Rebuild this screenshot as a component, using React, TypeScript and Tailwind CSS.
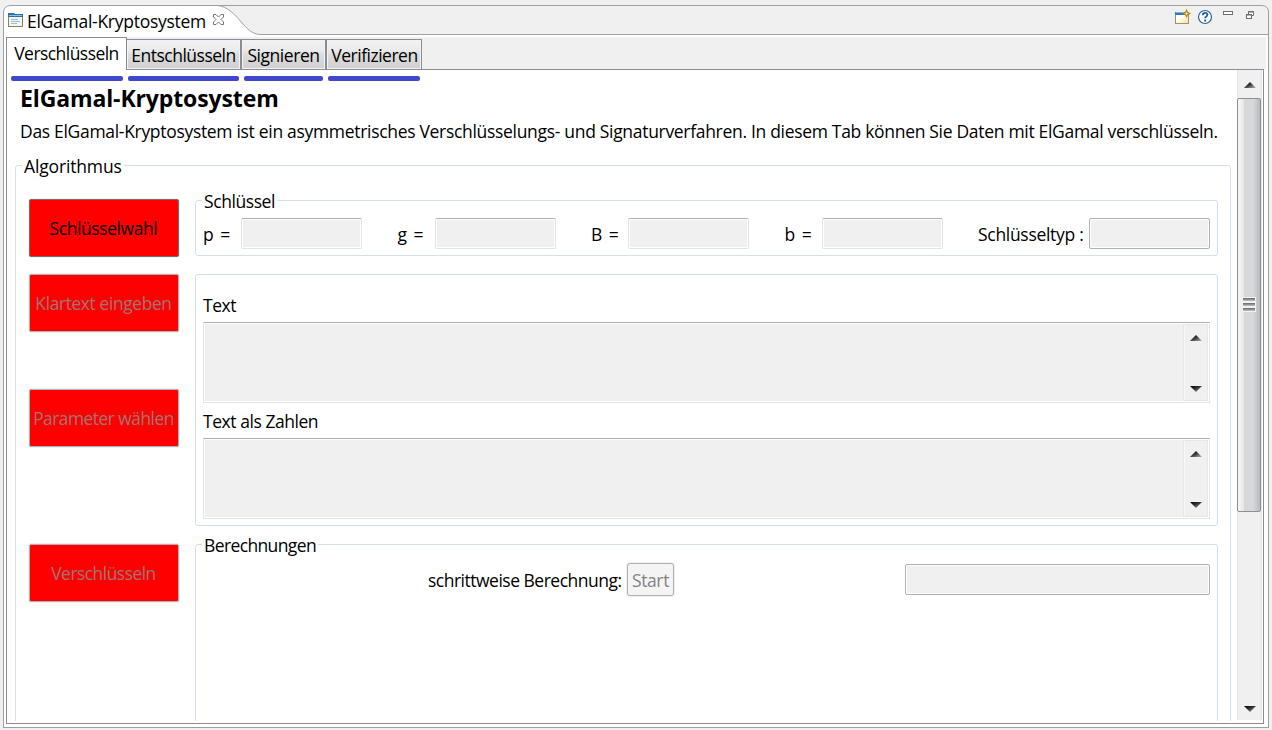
import type { ReactNode } from "react";

function Group({ label, labelClass = "", className, children }: { label?: string; labelClass?: string; className: string; children?: ReactNode }) {
  return (
    <section className={`relative rounded-[3px] border border-[#d5dfe9] ${className}`}>
      {label && (
        <h2 className={`absolute -top-[12px] left-[6px] bg-white px-[2px] leading-6 whitespace-nowrap ${labelClass}`}>{label}</h2>
      )}
      {children}
    </section>
  );
}

function Arrow({ down = false }: { down?: boolean }) {
  return (
    <svg width="12" height="6" viewBox="0 0 12 6" className="block shrink-0">
      <defs>
        <linearGradient id="arrowShade" x1="0" y1="0" x2="1" y2="1">
          <stop offset="0" stopColor="#000" />
          <stop offset="0.45" stopColor="#333" />
          <stop offset="1" stopColor="#b8b8b8" />
        </linearGradient>
      </defs>
      <path d={down ? "M0 0H12L6 6Z" : "M0 6H12L6 0Z"} fill="url(#arrowShade)" />
    </svg>
  );
}

function RedButton({ children, active = false, className = "" }: { children: ReactNode; active?: boolean; className?: string }) {
  return (
    <button
      className={`flex h-[58px] w-[150px] shrink-0 items-center justify-center rounded-[2px] border bg-[#ff0000] pr-px whitespace-nowrap ${
        active ? "border-[#707070] text-black" : "border-[#adb2b5] text-[#a07474]"
      } shadow-[0_0_0_1px_#f0f0f0] ${className}`}
    >
      {children}
    </button>
  );
}

function KeyField({ name, className = "" }: { name: string; className?: string }) {
  return (
    <label className="flex w-[193.5px] shrink-0 items-center">
      <span className={`w-[38px] leading-6 whitespace-pre [word-spacing:2px] ${className}`}>{name} =</span>
      <span className="h-[31px] w-[121px] rounded-[2px] border border-[#e2e3ea] border-t-[#abadb3] bg-[#f0f0f0] shadow-[inset_0_0_0_1px_#fff]" />
    </label>
  );
}

function TextArea() {
  return (
    <div className="flex h-[81px] w-[1007px] justify-end border border-[#e2e3ea] border-t-[#abadb3] bg-[#f0f0f0] p-px shadow-[inset_0_0_0_1px_#fff]">
      <div className="flex w-[25px] flex-col items-center justify-between border border-[#e6e6e6] bg-[#f0f0f0] pt-[10px] pb-[8px] pl-px shadow-[inset_1px_0_0_#f8f8f8]">
        <Arrow />
        <Arrow down />
      </div>
    </div>
  );
}

function InnerTab({ children, className }: { children: ReactNode; className: string }) {
  return (
    <div
      className={`mt-[2px] flex h-[31px] items-center justify-center border border-[#898c95] bg-[linear-gradient(180deg,#f2f2f2_0%,#ebebeb_35%,#dddddd_50%,#cfcfcf_100%)] pt-[1px] whitespace-nowrap shadow-[inset_0_0_0_1px_#f3f3f3] ${className}`}
    >
      {children}
    </div>
  );
}

function WindowIcons() {
  return (
    <svg width="90" height="20" viewBox="1172 7 90 20" className="shrink-0">
      <defs>
        <linearGradient id="windowFill" x1="0" y1="0" x2="1" y2="1">
          <stop offset="0.4" stopColor="#fff" />
          <stop offset="1" stopColor="#f7df96" />
        </linearGradient>
      </defs>
      <rect x="1175.5" y="12.5" width="13" height="11" fill="url(#windowFill)" stroke="#a99258" />
      <path d="M1175 12h10v3h-10z" fill="#2f78bd" />
      <path d="M1176 12.5h8" stroke="#75b5e8" />
      <path d="M1186.5 10.3l1 2.200 2.200 1-2.200 1-1 2.200-1-2.200-2.200-1 2.200-1z" fill="#fff3bb" stroke="#bd8516" strokeWidth="1.2" />
      <circle cx="1205" cy="17" r="6.5" fill="#fff" stroke="#2a659c" strokeWidth="1.2" />
      <path d="M1202.8 15.2c0-3.2 4.6-3 4.6-.4 0 1.7-2.3 1.7-2.3 3.5" fill="none" stroke="#1d62a2" strokeWidth="1.8" />
      <path d="M1204.2 19.5h2v2h-2z" fill="#1d62a2" />
      <rect x="1223.5" y="11.5" width="9" height="3" fill="#fff" stroke="#6d6d6d" />
      <path d="M1248.5 14.5v-3h5v4h-3" fill="#fff" stroke="#6d6d6d" />
      <path d="M1248 12h6" stroke="#6d6d6d" />
      <rect x="1246.5" y="14.5" width="5" height="4" fill="#fff" stroke="#6d6d6d" />
      <path d="M1246 15h6" stroke="#6d6d6d" />
    </svg>
  );
}

function ViewHeader() {
  return (
    <header className="relative flex h-[30px] shrink-0 items-start">
      <svg width="1266" height="30" viewBox="3 5 1266 30" className="absolute inset-0">
        <path d="M3.5 35V13Q3.5 5.5 11 5.5H218C228 6 236 16 243 24C249 31 254 34.5 261 34.5V35Z" fill="#fff" />
        <path d="M3.5 35V13Q3.5 5.5 11 5.5H1262Q1268.5 6 1268.5 12V35M217 5.5C228 6 236 16 243 24C249 31 254 34.5 261 34.5H1268" fill="none" stroke="#a0a0a0" />
      </svg>
      <div className="relative flex h-full w-full items-start">
        <svg width="16" height="16" viewBox="0 0 16 16" className="mt-[7px] ml-[5px] shrink-0">
          <rect x="0.5" y="2.5" width="14" height="12" fill="#eef6fd" stroke="#90834f" />
          <path d="M0 1h6l1 1h8v3H0z" fill="#2e70a9" />
          <path d="M1 3.5h13" stroke="#8bc3eb" />
          <path d="M3 7.500h7M3 9.500h9M3 11.500h6" stroke="#a3bcd8" />
        </svg>
        <span className="mt-[4px] ml-[3px] w-[180px] leading-6 tracking-[-0.27px] whitespace-nowrap">ElGamal-Kryptosystem</span>
        <svg width="12" height="12" viewBox="0 0 12 12" className="mt-[9px] ml-[6px] shrink-0">
          <path d="M.5 .5H3L5.500 3 8 .5H10.500V3L8 5.500 10.500 8V10.500H8L5.500 8 3 10.500H.5V8L3 5.500.5 3Z" fill="#fff" stroke="#747474" />
        </svg>
        <div className="flex-1" />
        <div className="mt-[2px] mr-[10px]">
          <WindowIcons />
        </div>
      </div>
    </header>
  );
}

function Grip() {
  return <i className="h-[3px] w-[12px] shrink-0 bg-linear-to-b from-[#666] to-[#c4c4c4] shadow-[0_0_0_1px_#f3f3f3]" />;
}

function MainScrollbar() {
  return (
    <div className="flex h-[650px] w-[25px] shrink-0 flex-col items-start bg-[#f0f0f0] shadow-[inset_1px_0_0_#e6e6e6,inset_-1px_0_0_#e6e6e6]">
      <div className="flex h-[28px] items-start pt-[12px] pl-[7px]">
        <Arrow />
      </div>
      <div className="flex h-[414px] w-[24px] flex-col items-center justify-center gap-[2px] rounded-[2px] border border-[#8e8e93] bg-[linear-gradient(90deg,#f7f7f7_0%,#e8e8e9_25%,#d6d7d9_29%,#d8d9db_68%,#b9b9c0_100%)] pb-[1px]">
        <Grip />
        <Grip />
        <Grip />
      </div>
      <div className="flex flex-1 items-end pb-[8px] pl-[7px]">
        <Arrow down />
      </div>
    </div>
  );
}

export default function App() {
  return (
    <div className="flex h-[730px] w-[1272px] flex-col overflow-hidden bg-[#f0f0f0] pt-[5px] pl-[3px] font-['Open_Sans','Noto_Sans',sans-serif] text-[17.5px] text-black">
      <ViewHeader />
      <div className="flex h-[693px] w-[1266px] flex-col border-x border-b border-[#a0a0a0] bg-white pt-[2px] pl-[2px]">
        <nav className="flex h-[33px] w-[1260px] shrink-0 bg-[#f0f0f0]">
          <div className="flex w-[121px] justify-center border-t border-x border-[#898c95] bg-white pt-[3px] leading-6 tracking-[-0.55px] whitespace-nowrap">Verschlüsseln</div>
          <InnerTab className="-ml-px w-[115px] tracking-[-0.5px]">Entschlüsseln</InnerTab>
          <InnerTab className="w-[85px] tracking-[-0.45px]">Signieren</InnerTab>
          <InnerTab className="w-[96px] pl-px tracking-[-0.5px]">Verifizieren</InnerTab>
          <div className="mr-[2px] flex-1 border-b border-[#898c95]" />
        </nav>
        <main className="flex h-[654px] w-[1258px] shrink-0 border-x border-b border-[#898c95]">
          <div className="h-[651px] w-[1230px] shrink-0 overflow-hidden">
            <div className="flex pt-[6px] pl-[4px]">
              <i className="h-[5px] w-[112px] rounded-[2px] bg-[#3f48cc]" />
              <i className="ml-[5px] h-[5px] w-[111px] rounded-[2px] bg-[#3f48cc]" />
              <i className="ml-[5px] h-[5px] w-[79px] rounded-[2px] bg-[#3f48cc]" />
              <i className="ml-[5px] h-[5px] w-[92px] rounded-[2px] bg-[#3f48cc]" />
            </div>
            <h1 className="mt-[2px] ml-[13px] text-[23px] leading-[30px] font-bold tracking-[-0.12px] whitespace-nowrap">ElGamal-Kryptosystem</h1>
            <p className="mt-[6px] ml-[13px] leading-6 tracking-[-0.31px] whitespace-nowrap">
              Das ElGamal-Kryptosystem ist ein asymmetrisches Verschlüsselungs- und Signaturverfahren. In diesem Tab können Sie Daten mit ElGamal verschlüsseln.
            </p>
            <Group label="Algorithmus" labelClass="tracking-[-0.15px]" className="mt-[22px] ml-[8px] flex h-[600px] w-[1216px]">
              <div className="flex w-[179px] shrink-0 flex-col pt-[33px] pl-[13px]">
                <RedButton active className="tracking-[-0.42px]">Schlüsselwahl</RedButton>
                <RedButton className="mt-[17px] tracking-[-0.43px]">Klartext eingeben</RedButton>
                <RedButton className="mt-[57px] tracking-[-0.58px]">Parameter wählen</RedButton>
                <RedButton className="mt-[97px] tracking-[-0.55px]">Verschlüsseln</RedButton>
              </div>
              <div className="w-[1023px] shrink-0 pt-[34px]">
                <Group label="Schlüssel" labelClass="tracking-[-0.42px]" className="flex h-[56px] w-[1023px] items-start pt-[17px] pl-[7px]">
                  <KeyField name="p" />
                  <KeyField name="g" className="pl-px" />
                  <KeyField name="B" className="pl-px" />
                  <KeyField name="b" className="pl-px" />
                  <span className="mt-[4px] w-[112px] shrink-0 pl-px leading-6 tracking-[-0.3px] whitespace-nowrap">Schlüsseltyp :</span>
                  <span className="h-[31px] w-[121px] shrink-0 rounded-[2px] border border-[#afafaf] bg-[#f0f0f0] shadow-[inset_0_0_0_1px_#fff]" />
                </Group>
                <Group className="mt-[18px] h-[252px] w-[1023px] pt-[18px] pl-[7px]">
                  <div className="leading-6 tracking-[-0.5px]">Text</div>
                  <div className="mt-[5px]">
                    <TextArea />
                  </div>
                  <div className="mt-[6px] leading-6 tracking-[-0.45px]">Text als Zahlen</div>
                  <div className="mt-[5px]">
                    <TextArea />
                  </div>
                </Group>
                <Group label="Berechnungen" labelClass="tracking-[-0.62px]" className="mt-[18px] flex h-[300px] w-[1023px] items-start pt-[18px] pl-[232px]">
                  <span className="mt-[5px] w-[199px] shrink-0 leading-6 tracking-[-0.5px] whitespace-nowrap">schrittweise Berechnung:</span>
                  <button className="flex h-[33px] w-[47px] shrink-0 items-center justify-center rounded-[3px] border border-[#adb2b5] bg-[#f4f4f4] pt-[2px] tracking-[-0.4px] text-[#838383] shadow-[0_0_0_1px_#f0f0f0]">Start</button>
                  <span className="mt-px ml-[231px] h-[31px] w-[305px] shrink-0 rounded-[2px] border border-[#afafaf] bg-[#f0f0f0] shadow-[inset_0_0_0_1px_#fff]" />
                </Group>
              </div>
            </Group>
          </div>
          <MainScrollbar />
        </main>
      </div>
    </div>
  );
}
